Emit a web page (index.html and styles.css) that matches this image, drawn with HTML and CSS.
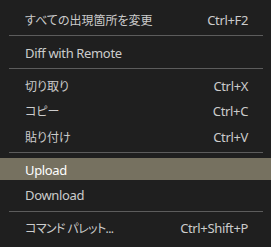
FILE: index.html
```html
<!DOCTYPE html>
<html lang="ja">
<head>
<meta charset="utf-8">
<link rel="stylesheet" href="styles.css">
</head>
<body>
<div class="menu">
  <div class="item"><span class="label ja">すべての出現箇所を変更</span><span class="key">Ctrl+F2</span></div>
  <div class="sep"></div>
  <div class="item"><span class="label">Diff with Remote</span></div>
  <div class="sep"></div>
  <div class="item"><span class="label ja">切り取り</span><span class="key">Ctrl+X</span></div>
  <div class="item"><span class="label ja">コピー</span><span class="key">Ctrl+C</span></div>
  <div class="item"><span class="label ja">貼り付け</span><span class="key">Ctrl+V</span></div>
  <div class="sep"></div>
  <div class="item active"><span class="label">Upload</span></div>
  <div class="item"><span class="label">Download</span></div>
  <div class="sep"></div>
  <div class="item"><span class="label ja narrow">コマンド パレット...</span><span class="key">Ctrl+Shift+P</span></div>
</div>
</body>
</html>
```

FILE: styles.css
```css
html, body {
  margin: 0;
  padding: 0;
  background: #1f1f1f;
  height: 100%;
}
.menu {
  display: flex;
  flex-direction: column;
  padding-top: 6.25px;
  font-family: "Noto Sans", "Noto Sans CJK JP", sans-serif;
  font-size: 13px;
  letter-spacing: -0.35px;
  font-feature-settings: "palt";
  color: #cccccc;
}
.item {
  display: flex;
  align-items: center;
  justify-content: space-between;
  height: 22px;
  margin: 1.75px 0;
  padding: 1px 23px 0 25px;
  box-sizing: border-box;
  white-space: nowrap;
}
.ja {
  font-size: 12px;
  letter-spacing: 0;
}
.ja.narrow {
  letter-spacing: -0.6px;
}
.item.active {
  background: #767160;
  color: #ffffff;
}
.sep {
  height: 1px;
  margin: 3.25px 8px 3.25px 9px;
  background: #5c5c5c;
}
```
